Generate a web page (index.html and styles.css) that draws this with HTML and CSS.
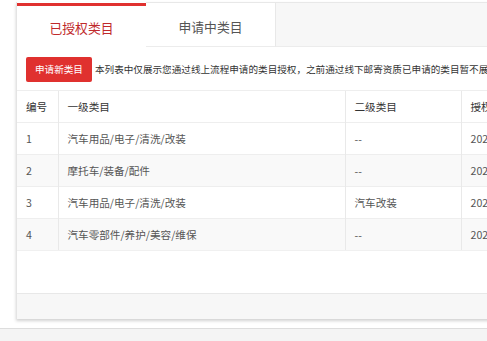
FILE: index.html
```html
<!DOCTYPE html>
<html lang="zh-CN">
<head>
<meta charset="utf-8">
<title>已授权类目</title>
<link rel="stylesheet" href="styles.css">
</head>
<body>
<div class="page">
  <div class="panel">
    <div class="tabs">
      <div class="tab tab-active">已授权类目</div>
      <div class="tab">申请中类目</div>
      <div class="tab-fill"></div>
    </div>
    <div class="panel-body">
      <div class="toolbar">
        <button class="btn-primary" type="button">申请新类目</button>
        <span class="notice">本列表中仅展示您通过线上流程申请的类目授权，之前通过线下邮寄资质已申请的类目暂不展示，如有疑问请联系客服</span>
      </div>
      <table class="grid">
        <colgroup>
          <col class="c-no">
          <col class="c-first">
          <col class="c-second">
          <col class="c-time">
        </colgroup>
        <thead>
          <tr><th class="first">编号</th><th>一级类目</th><th>二级类目</th><th>授权时间</th></tr>
        </thead>
        <tbody>
          <tr><td class="first">1</td><td>汽车用品/电子/清洗/改装</td><td>--</td><td>2021-03-15 10:22:31</td></tr>
          <tr class="alt"><td class="first">2</td><td>摩托车/装备/配件</td><td>--</td><td>2021-03-15 10:22:31</td></tr>
          <tr><td class="first">3</td><td>汽车用品/电子/清洗/改装</td><td>汽车改装</td><td>2021-03-15 10:22:31</td></tr>
          <tr class="alt"><td class="first">4</td><td>汽车零部件/养护/美容/维保</td><td>--</td><td>2021-03-15 10:22:31</td></tr>
        </tbody>
      </table>
      <div class="empty-space"></div>
    </div>
    <div class="panel-foot"></div>
  </div>
  <div class="bottom-bar"></div>
</div>
</body>
</html>
```

FILE: styles.css
```css
html, body {
  margin: 0;
  padding: 0;
  background: #ffffff;
  overflow: hidden;
}

body {
  font-family: "Noto Sans CJK SC", "Noto Sans", "Liberation Sans", sans-serif;
  color: #333333;
}

.page {
  width: 487px;
  height: 341px;
  padding-top: 2px;
  box-sizing: border-box;
  display: flex;
  flex-direction: column;
}

.panel {
  margin-left: 16px;
  width: 720px;
  background: #ffffff;
  border-left: 1px solid #e4e4e4;
  box-shadow: 0 2px 3px rgba(0, 0, 0, 0.18);
  display: flex;
  flex-direction: column;
  flex: none;
}

.tabs {
  display: flex;
  height: 45px;
}

.tab {
  width: 130px;
  flex: none;
  box-sizing: border-box;
  border-top: 1px solid #e8e8e8;
  border-bottom: 1px solid #ececec;
  border-right: 1px solid #e8e8e8;
  background: #ffffff;
  font-size: 12.8px;
  color: #555555;
  display: flex;
  align-items: center;
  justify-content: center;
  padding-top: 4px;
}

.tab-active {
  width: 129px;
  margin-top: 1px;
  border-top: 3px solid #e0312f;
  border-bottom: none;
  border-right: none;
  color: #c0292b;
  padding-top: 1px;
}

.tab-fill {
  flex: 1;
  background: #f7f7f7;
  border-top: 1px solid #e8e8e8;
  border-bottom: 1px solid #ececec;
}

.panel-body {
  display: flex;
  flex-direction: column;
}

.toolbar {
  height: 43px;
  display: flex;
  align-items: center;
  padding-left: 9px;
  padding-top: 1px;
  box-sizing: border-box;
  white-space: nowrap;
}

.btn-primary {
  height: 25px;
  padding: 0 9px;
  border: none;
  border-radius: 2px;
  background: #e0312f;
  color: #ffffff;
  font-family: inherit;
  font-size: 9.6px;
  line-height: 25px;
  margin-right: 3px;
}

.notice {
  font-size: 9.6px;
  color: #333333;
}

.grid {
  border-collapse: collapse;
  table-layout: fixed;
  width: 703px;
  font-size: 10.6px;
}

.c-no { width: 41px; }
.c-first { width: 287px; }
.c-second { width: 116px; }
.c-time { width: 259px; }

.grid th,
.grid td {
  height: 31px;
  padding: 0 9px;
  text-align: left;
  font-weight: normal;
  border-top: 1px solid #eeeeee;
  border-left: 1px solid #e9e9e9;
  white-space: nowrap;
  overflow: hidden;
}

.grid th {
  color: #333333;
}

.grid td {
  color: #555555;
}

.grid .first {
  border-left: none;
  padding-left: 9px;
}

.grid tr.alt td {
  background: #f9f9f9;
}

.grid tbody tr:last-child td {
  border-bottom: 1px solid #f0f0f0;
}

.empty-space {
  height: 42px;
}

.panel-foot {
  height: 25px;
  background: #f7f7f7;
  border-top: 1px solid #e8e8e8;
}

.bottom-bar {
  margin-top: 9px;
  flex: 1;
  background: #f4f4f4;
  border-top: 1px solid #dddddd;
}
```
